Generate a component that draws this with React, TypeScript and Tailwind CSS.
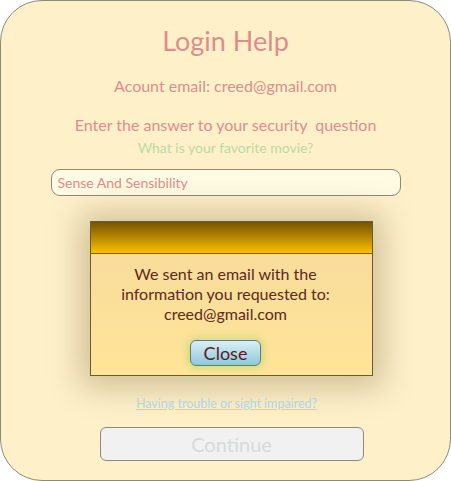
export default function App() {
  const font = { fontFamily: "Lato, 'Open Sans', sans-serif" };
  return (
    <div className="w-[451px] h-[481px] bg-white" style={font}>
      <div className="w-[451px] h-[481px] rounded-[42px] border border-[#8c8a7c] bg-[#fef1c9] flex flex-col items-center">
        <h1 className="mt-[23px] text-[27px] leading-[34px] text-[#dc8e8c]">Login Help</h1>
        <p className="mt-[18px] text-[16px] leading-[20px] text-[#dc8e8c]">Acount email: creed@gmail.com</p>
        <p className="mt-[19px] text-[16px] leading-[20px] text-[#dc8e8c]">Enter the answer to your security&nbsp; question</p>
        <p className="mt-[4px] text-[14px] leading-[18px] text-[#bcd9a4]">What is your favorite movie?</p>
        <div className="mt-[12px] w-[350px] h-[27px] rounded-[9px] border border-[#8c8a7c] bg-[#fefbe2] flex items-center px-[6px] text-[14px] text-[#dc8e8c]">
          Sense And Sensibility
        </div>
        <div className="mt-[25px] ml-[12px] w-[283px] h-[155px] border border-[#6b5a30] shadow-[0_2px_30px_10px_rgba(90,70,20,0.28)] flex flex-col">
          <div className="h-[32px] border-b border-[#6b5a30] bg-gradient-to-b from-[#765400] to-[#fcc000]" />
          <div className="flex-1 pr-[12px] bg-gradient-to-b from-[#f7dc9c] to-[#ffe597] flex flex-col items-center">
            <p className="mt-[10px] text-[16px] leading-[20px] text-[#5c2a1e] text-center">
              We sent an email with the<br />information you requested to:<br />creed@gmail.com
            </p>
            <button className="mt-[16px] w-[71px] h-[26px] rounded-[6px] border border-[#5f7a80] bg-gradient-to-b from-[#d8f0f6] to-[#8ec8da] text-[18px] leading-[22px] text-[#5c1a1a] shadow-[0_0_6px_3px_rgba(200,220,120,0.8)]">
              Close
            </button>
          </div>
        </div>
        <a className="mt-[20px] ml-[2px] text-[12.5px] leading-[16px] text-[#a9d8ef] underline">Having trouble or sight impaired?</a>
        <button className="mt-[15px] ml-[12px] w-[264px] h-[34px] rounded-[6px] border border-[#8c8a7c] bg-[#f1f1f1] text-[20px] text-[#d9d9d9]">
          Continue
        </button>
      </div>
    </div>
  );
}
